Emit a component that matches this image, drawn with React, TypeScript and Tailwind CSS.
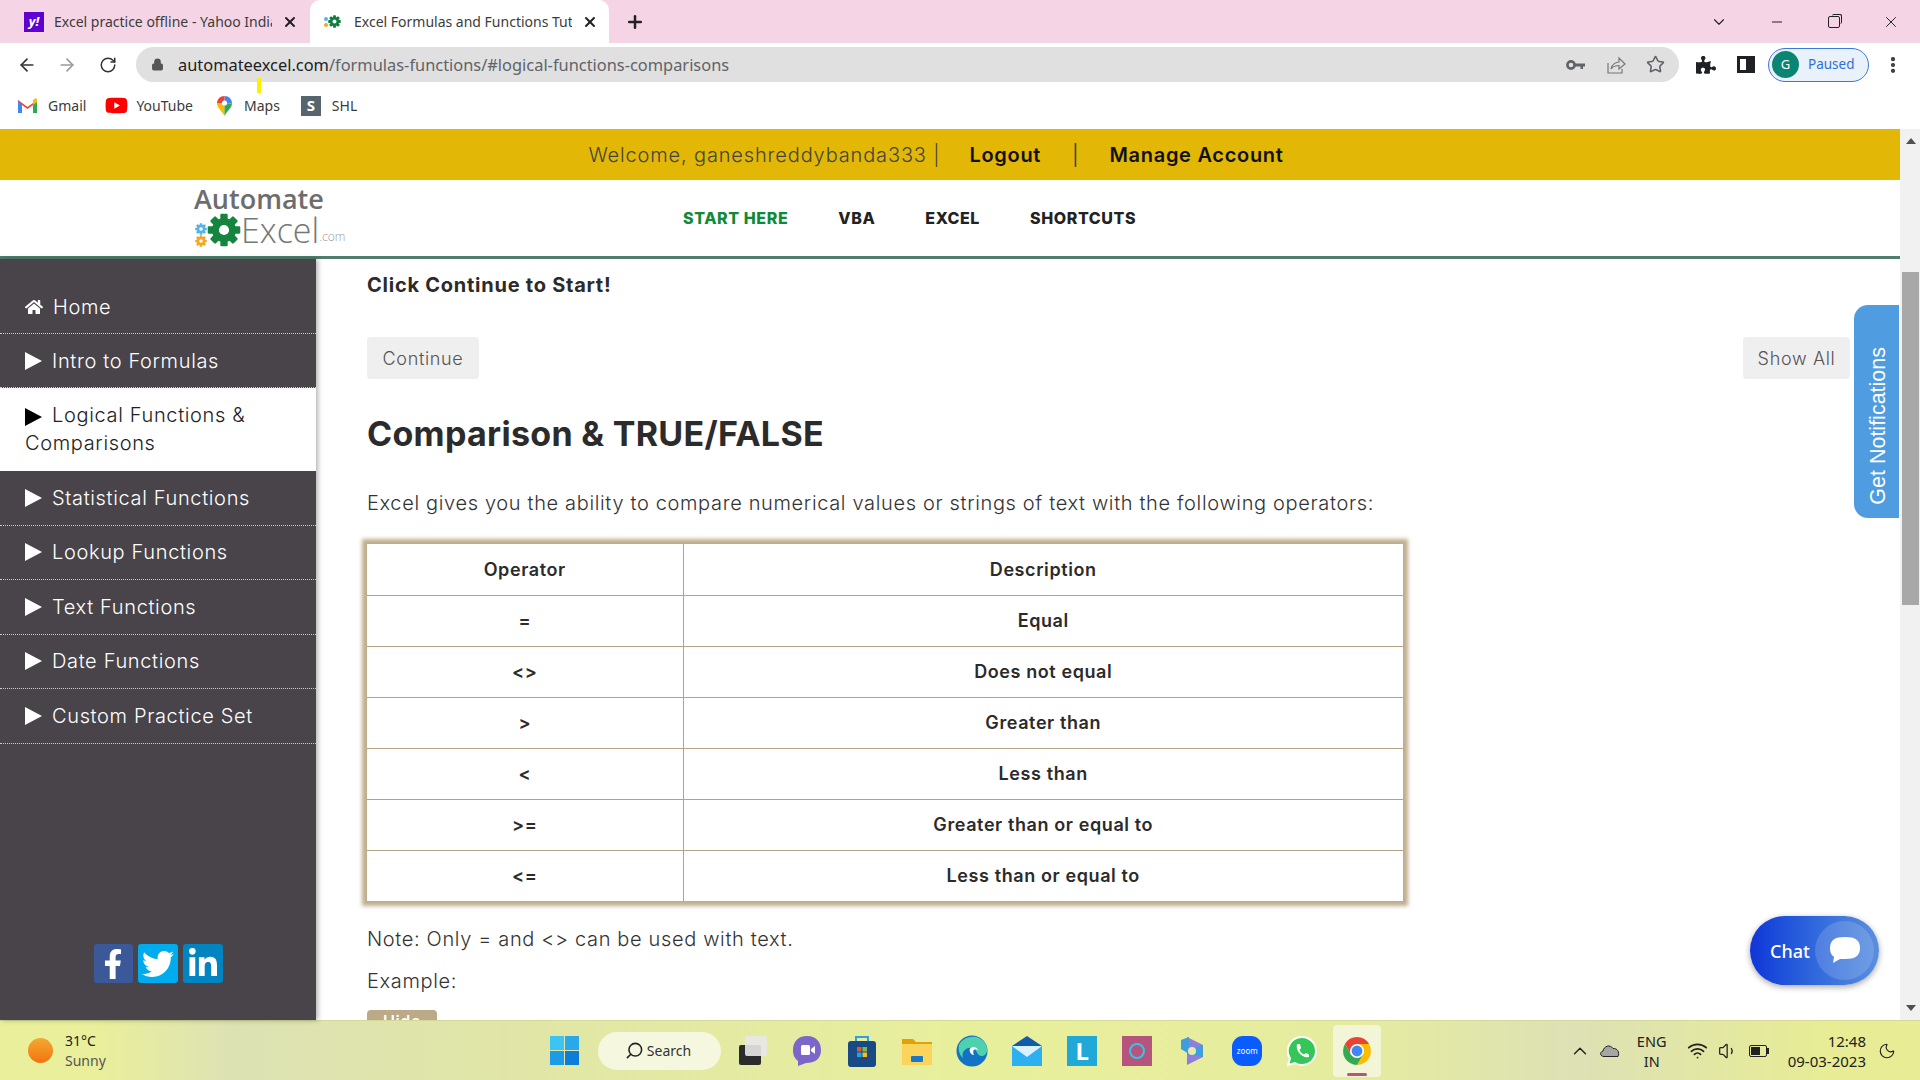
import { ArrowLeft, ArrowRight, RotateCw, Lock, Star, Plus, X, Minus, ChevronDown, ChevronUp, Search, Wifi, Volume1, Moon, EllipsisVertical } from 'lucide-react';
import { FaHome, FaFacebookF, FaTwitter, FaLinkedinIn, FaPuzzlePiece, FaYoutube } from 'react-icons/fa';

const chromeFont = "font-['Noto_Sans',sans-serif]";

const sideItems = [
  'Statistical Functions',
  'Lookup Functions',
  'Text Functions',
  'Date Functions',
  'Custom Practice Set',
];

const rows = [
  ['Operator', 'Description'],
  ['=', 'Equal'],
  ['<>', 'Does not equal'],
  ['>', 'Greater than'],
  ['<', 'Less than'],
  ['>=', 'Greater than or equal to'],
  ['<=', 'Less than or equal to'],
];

function Gear({ size, color }: { size: number; color: string }) {
  const teeth = [0, 45, 90, 135, 180, 225, 270, 315];
  return (
    <svg width={size} height={size} viewBox="0 0 24 24">
      {teeth.map((a) => (
        <rect key={a} x="9.4" y="0.5" width="5.2" height="6" rx="0.8" fill={color} transform={`rotate(${a} 12 12)`} />
      ))}
      <circle cx="12" cy="12" r="8.5" fill={color} />
      <circle cx="12" cy="12" r="3.6" fill="#fff" />
    </svg>
  );
}

function Triangle({ dark }: { dark?: boolean }) {
  return (
    <svg width="17" height="18" viewBox="0 0 17 18" className="inline-block shrink-0">
      <path d="M0 0 L17 9 L0 18 Z" fill={dark ? '#000' : '#fff'} />
    </svg>
  );
}

function Tab({ active, title, icon }: { active?: boolean; title: string; icon: React.ReactNode }) {
  return (
    <div className={`relative flex h-[43px] w-[299px] items-center rounded-t-[10px] pl-[14px] ${active ? 'bg-white ml-[1px]' : 'ml-[10px]'}`}>
      <span className="flex w-[30px] shrink-0 items-center">{icon}</span>
      <span className="w-[218px] overflow-hidden whitespace-nowrap pb-[1px] text-[14px] text-[#3c3c3c]">{title}</span>
      <X size={16} strokeWidth={3} className="ml-[10px] text-[#222]" />
    </div>
  );
}

function ChromeIcon() {
  return (
    <svg width="30" height="30" viewBox="0 0 30 30">
      <path d="M15 1 A14 14 0 0 1 27.1 8 L15 8 Z" fill="#ea4335" />
      <path d="M15 1 A14 14 0 0 0 2.9 8 L8.9 18.5 L15 8 Z" fill="#ea4335" />
      <path d="M27.1 8 A14 14 0 0 1 15 29 L21 18.5 L15 8 Z" fill="#fbbc04" />
      <path d="M2.9 8 A14 14 0 0 0 15 29 L21 18.5 L8.9 18.5 Z" fill="#34a853" />
      <circle cx="15" cy="15" r="7" fill="#fff" />
      <circle cx="15" cy="15" r="5.4" fill="#4285f4" />
    </svg>
  );
}

function TaskIcons() {
  return (
    <div className="flex items-center">
      {/* task view */}
      <div className="flex w-[55px] justify-center">
        <svg width="32" height="32" viewBox="0 0 32 32">
          <rect x="3" y="10" width="22" height="20" rx="2" fill="#2b2b2b" />
          <rect x="9" y="1" width="22" height="20" rx="2" fill="#e8e8e8" opacity="0.9" />
        </svg>
      </div>
      {/* meet */}
      <div className="flex w-[55px] justify-center">
        <svg width="30" height="32" viewBox="0 0 30 32">
          <path d="M15 1 C24 1 29 7 29 15 C29 24 23 28 14 28 L6 31 L6 26 C2 23 1 19 1 15 C1 7 6 1 15 1 Z" fill="#7b67c9" />
          <rect x="9" y="10" width="9" height="10" rx="1.5" fill="#fff" />
          <path d="M19 14 L23 11 L23 19 L19 16 Z" fill="#fff" />
        </svg>
      </div>
      {/* store */}
      <div className="flex w-[55px] justify-center">
        <svg width="30" height="32" viewBox="0 0 30 32">
          <path d="M9 6 V2 H21 V6" fill="none" stroke="#2aa4dc" strokeWidth="2" />
          <rect x="1" y="6" width="28" height="26" rx="3" fill="#1a4a86" />
          <rect x="10" y="12" width="4.5" height="4.5" fill="#e8542e" />
          <rect x="15.5" y="12" width="4.5" height="4.5" fill="#7cbb42" />
          <rect x="10" y="17.5" width="4.5" height="4.5" fill="#1ea5e0" />
          <rect x="15.5" y="17.5" width="4.5" height="4.5" fill="#fbbb1a" />
        </svg>
      </div>
      {/* files */}
      <div className="flex w-[55px] justify-center">
        <svg width="32" height="30" viewBox="0 0 32 30">
          <path d="M1 3 H12 L15 6 H31 V29 H1 Z" fill="#e0a10a" />
          <rect x="1" y="8" width="30" height="21" fill="#fbd55b" />
          <rect x="10" y="20" width="12" height="6" rx="1" fill="#1b78c8" />
        </svg>
      </div>
      {/* edge */}
      <div className="flex w-[55px] justify-center">
        <svg width="32" height="32" viewBox="0 0 32 32">
          <circle cx="16" cy="16" r="15.5" fill="#1273c4" />
          <path d="M3 10 C7 1 22 -2 29 8 C33 14 31 21 26 21 C20 21 22 14 16 13 C10 12 5 17 7 23 C3 20 2 14 3 10 Z" fill="#4fd1b0" />
          <path d="M14 17 C12 12 20 10 22 15 C18 13 16 16 18 20 C16 20 15 19 14 17 Z" fill="#fff" />
        </svg>
      </div>
      {/* mail */}
      <div className="flex w-[55px] justify-center">
        <svg width="30" height="30" viewBox="0 0 30 30">
          <path d="M0 10 L15 0 L30 10 V12 H0 Z" fill="#0f5cab" />
          <rect x="0" y="10" width="30" height="20" fill="#2cb0f0" />
          <path d="M0 10 H30 L15 21 Z" fill="#d9f2fd" />
        </svg>
      </div>
      {/* L app */}
      <div className="flex w-[55px] justify-center">
        <div className={`flex h-[30px] w-[30px] items-center justify-center bg-[#20a8d8] text-[24px] font-bold leading-none text-white ${chromeFont}`}>L</div>
      </div>
      {/* alexa */}
      <div className="flex w-[55px] justify-center">
        <div className="flex h-[30px] w-[30px] items-center justify-center bg-[#b5547c]">
          <div className="h-[16px] w-[16px] rounded-full border-2 border-[#35c4e8]" />
        </div>
      </div>
      {/* copilot */}
      <div className="flex w-[55px] justify-center">
        <svg width="26" height="30" viewBox="0 0 26 30">
          <path d="M8 1 L24 9 V21 L8 29 Z" fill="#8f7fdc" />
          <path d="M2 4 L10 1 V14 L24 9 V21 L10 18 L2 13 Z" fill="#3f9fdc" />
          <circle cx="13" cy="15" r="4" fill="#e4eab0" />
        </svg>
      </div>
      {/* zoom */}
      <div className="flex w-[55px] justify-center">
        <div className={`flex h-[30px] w-[30px] items-center justify-center rounded-[11px] bg-[#0b5cff] text-[8px] text-white ${chromeFont}`}>zoom</div>
      </div>
      {/* whatsapp */}
      <div className="flex w-[55px] justify-center">
        <svg width="30" height="32" viewBox="0 0 30 32">
          <path d="M15 2 A14 14 0 0 1 15 30 C12.5 30 10 29.3 8 28 L1 30 L3 23.5 A14 14 0 0 1 15 2 Z" fill="#35c65a" stroke="#fff" strokeWidth="2" />
          <path d="M10 9 L13 9 L14 13 L12.5 15 C13.5 17 15 18.5 17 19.5 L19 18 L22 19.5 V22 C16 24 8 16 10 9 Z" fill="#fff" />
        </svg>
      </div>
      {/* chrome, the open window */}
      <div className="relative mx-[3px] flex h-[52px] w-[48px] items-center justify-center rounded-[4px] bg-[#f3f6d6]">
        <ChromeIcon />
        <div className="absolute bottom-[1px] left-[14px] h-[3px] w-[20px] rounded-full bg-[#b5547c]" />
      </div>
    </div>
  );
}

export default function App() {
  return (
    <div className="flex h-[1080px] w-[1920px] flex-col overflow-hidden bg-white">
      {/* Tab strip */}
      <div className={`flex h-[43px] shrink-0 items-center bg-[#f5d5e5] ${chromeFont}`}>
        <Tab
          title="Excel practice offline - Yahoo India"
          icon={<span className="flex h-[20px] w-[20px] items-center justify-center bg-[#5f01d1] text-[13px] font-bold italic text-white">y!</span>}
        />
        <Tab
          active
          title="Excel Formulas and Functions Tutorial"
          icon={
            <span className="flex items-center">
              <span className="flex flex-col gap-[2px]">
                <span className="h-[4px] w-[4px] rounded-full bg-[#55b4e6]" />
                <span className="h-[4px] w-[4px] rounded-full bg-[#f5a623]" />
              </span>
              <Gear size={13} color="#107c41" />
            </span>
          }
        />
        <Plus size={20} strokeWidth={3} className="ml-[16px] text-[#222]" />
        <div className="ml-auto flex items-center text-[#222]">
          <ChevronDown size={18} strokeWidth={1.5} />
          <Minus size={16} strokeWidth={1.5} className="ml-[41px]" />
          <div className="relative ml-[43px] h-[12px] w-[12px] rounded-[2px] border border-[#222] before:absolute before:-right-[3px] before:-top-[3px] before:h-[10px] before:w-[10px] before:rounded-[2px] before:border-r before:border-t before:border-[#222]" />
          <X size={18} strokeWidth={1.3} className="ml-[42px] mr-[20px]" />
        </div>
      </div>

      {/* Toolbar */}
      <div className={`relative flex h-[43px] shrink-0 items-center bg-white ${chromeFont}`}>
        <ArrowLeft size={20} strokeWidth={2} className="ml-[17px] text-[#333]" />
        <ArrowRight size={20} strokeWidth={2} className="ml-[20px] text-[#9a9a9a]" />
        <RotateCw size={18} strokeWidth={2} className="ml-[22px] text-[#333]" />
        <div className="ml-[19px] flex h-[35px] w-[1543px] items-center rounded-full bg-[#e0e0e0] pl-[15px]">
          <Lock size={13} fill="#555" strokeWidth={2} className="text-[#555]" />
          <span className="ml-[14px] pt-[1px] text-[16.4px] text-[#5f6368]"><span className="text-[#202124]">automateexcel.com</span>/formulas-functions/#logical-functions-comparisons</span>
          <svg width="19" height="12" viewBox="0 0 19 12" className="ml-auto">
            <circle cx="5" cy="6" r="3.6" fill="none" stroke="#5f6368" strokeWidth="2.6" />
            <path d="M9 4.5 H19 V7.5 H17 V10 H14.5 V7.5 H9 Z" fill="#5f6368" />
          </svg>
          <svg width="20" height="20" viewBox="0 0 20 20" fill="none" stroke="#777" strokeWidth="1.2" className="ml-[21px]">
            <path d="M2 8 V18 H16 V14" />
            <path d="M5 14 C6 9 10 7 13 7 V3 L19 9 L13 14 V10.5 C10 10.5 7 11.5 5 14 Z" />
          </svg>
          <Star size={19} strokeWidth={2} className="ml-[20px] mr-[14px] text-[#5f6368]" />
        </div>
        <FaPuzzlePiece size={20} className="ml-[17px] text-[#202124]" />
        <div className="ml-[21px] h-[17px] w-[18px] border-[3px] border-r-[9px] border-[#202124] bg-white" />
        <div className="ml-[13px] flex h-[34px] w-[101px] items-center rounded-full border border-[#3b78e0] bg-[#e9f1fb] pl-[3px]">
          <span className="flex h-[27px] w-[27px] items-center justify-center rounded-full bg-[#0b8573] text-[13px] text-white">G</span>
          <span className="ml-[9px] text-[13.5px] text-[#2f6fd8]">Paused</span>
        </div>
        <EllipsisVertical size={20} strokeWidth={3} className="ml-[14px] text-[#333]" />
        {/* cursor highlight */}
        <div className="absolute left-[257px] top-[35px] h-[15px] w-[4px] bg-[#ffee00]" />
      </div>

      {/* Bookmarks */}
      <div className={`flex h-[43px] shrink-0 items-center bg-white pb-[4px] text-[14px] text-[#3c3c3c] ${chromeFont}`}>
        <svg width="19" height="15" viewBox="0 0 19 15" className="ml-[18px]">
          <path d="M0 2 L9.5 9 L19 2 V15 H15 V7 L9.5 11 L4 7 V15 H0 Z" fill="#ea4335" />
          <path d="M0 3 V15 H4 V6 Z" fill="#4285f4" />
          <path d="M19 3 V15 H15 V6 Z" fill="#34a853" />
          <path d="M15 2 L17 0.5 C18 0 19 .8 19 2 V4 L15 7 Z" fill="#fbbc04" />
        </svg>
        <span className="ml-[11px]">Gmail</span>
        <FaYoutube size={23} className="ml-[19px] text-[#f00]" />
        <span className="ml-[8px]">YouTube</span>
        <svg width="15" height="20" viewBox="0 0 15 20" className="ml-[24px]">
          <path d="M7.5 0 C12 0 15 3 15 7.5 L7.5 7.5 Z" fill="#4285f4" />
          <path d="M7.5 0 C3 0 0 3 0 7.5 L7.5 7.5 Z" fill="#ea4335" />
          <path d="M0 7.5 C0 12 5 15 7.5 20 L7.5 7.5 Z" fill="#fbbc04" />
          <path d="M15 7.5 C15 12 10 15 7.5 20 L7.5 7.5 Z" fill="#34a853" />
          <circle cx="7.5" cy="7" r="2.6" fill="#fff" />
        </svg>
        <span className="ml-[12px]">Maps</span>
        <div className={`ml-[21px] flex h-[20px] w-[20px] items-center justify-center bg-[#56656d] text-[15px] font-bold text-white ${chromeFont}`}>S</div>
        <span className="ml-[11px]">SHL</span>
      </div>

      {/* Page + scrollbar */}
      <div className="relative flex min-h-0 flex-1 font-['Inter',sans-serif]">
        <div className="flex min-w-0 flex-1 flex-col border-t border-[#e2b705]">
          <div className="flex h-[50px] shrink-0 items-center justify-center bg-[#e2b705] pr-[28px] text-[20px] tracking-[0.7px] text-[#444]">
            <span className="font-light tracking-[0.85px]">Welcome, ganeshreddybanda333 |</span>
            <span className="ml-[29px] font-semibold text-[#111]">Logout</span>
            <span className="ml-[31px]">|</span>
            <span className="ml-[30px] font-semibold text-[#111]">Manage Account</span>
          </div>
          <header className="flex h-[79px] shrink-0 items-center border-b-[3px] border-[#4f7f6c] bg-white">
            <div className="ml-[194px] flex w-[160px] -translate-y-[2px] flex-col">
              <span className="font-['Open_Sans',sans-serif] text-[27px] font-semibold leading-[28px] text-[#6d6d6d]">Automate</span>
              <div className="flex items-end">
                <div className="flex flex-col pl-[1px]">
                  <Gear size={12} color="#55b4e6" />
                  <Gear size={12} color="#f5a623" />
                </div>
                <Gear size={34} color="#15843f" />
                <span className="font-['Open_Sans',sans-serif] text-[34px] font-light leading-[34px] text-[#777]">Excel</span>
                <span className="font-['Open_Sans',sans-serif] text-[12px] font-light leading-[20px] text-[#999]">.com</span>
              </div>
            </div>
            <nav className="ml-[329px] flex items-center gap-[50px] text-[16px] font-extrabold tracking-[0.6px] text-[#222]">
              <span className="text-[#108a36]">START HERE</span>
              <span>VBA</span>
              <span>EXCEL</span>
              <span>SHORTCUTS</span>
            </nav>
          </header>

          <div className="flex min-h-0 flex-1">
            <aside className="z-10 flex w-[316px] shrink-0 flex-col bg-[#48444a] text-[20px] font-light tracking-[0.65px] text-white shadow-[2px_0_5px_rgba(0,0,0,0.3)]">
              <div className="flex h-[75px] items-center border-b border-dotted border-[#ccc] pl-[25px] pt-[22px]">
                <FaHome size={18} />
                <span className="ml-[10px]">Home</span>
              </div>
              <div className="flex h-[54px] items-center gap-[10px] border-b border-dotted border-[#ccc] pl-[25px]">
                <Triangle />
                <span>Intro to Formulas</span>
              </div>
              <div className="h-[83px] bg-white pl-[25px] pt-[13px] leading-[28px] text-[#222]">
                <Triangle dark />
                <span className="ml-[10px]">Logical Functions &amp;</span>
                <br />
                Comparisons
              </div>
              {sideItems.map((s) => (
                <div key={s} className="flex h-[54.5px] items-center gap-[10px] border-b border-dotted border-[#ccc] pl-[25px]">
                  <Triangle />
                  <span>{s}</span>
                </div>
              ))}
              <div className="mt-auto mb-[37px] flex justify-center gap-[5px]">
                <div className="flex h-[39px] w-[39px] items-center justify-center rounded-[3px] bg-[#3b5998]"><FaFacebookF size={30} /></div>
                <div className="flex h-[39px] w-[40px] items-center justify-center rounded-[3px] bg-[#00aced]"><FaTwitter size={32} /></div>
                <div className="flex h-[39px] w-[40px] items-center justify-center rounded-[3px] bg-[#0284c0]"><FaLinkedinIn size={32} /></div>
              </div>
            </aside>

            <main className="min-w-0 flex-1 overflow-hidden pl-[51px] pr-[50px] text-[20px] font-light tracking-[0.65px] text-[#333]">
              <p className="mt-[12px] font-bold leading-[28px] tracking-[0.75px] text-[#2b2b2b]">Click Continue to Start!</p>
              <div className="mt-[38px] flex justify-between text-[18px]">
                <button className="h-[42px] w-[112px] rounded-[4px] bg-[#efefef] text-[#555]">Continue</button>
                <button className="h-[42px] w-[107px] rounded-[4px] bg-[#efefef] text-[#555]">Show All</button>
              </div>
              <h2 className="mt-[33px] text-[34px] font-bold leading-[44px] tracking-[0.3px] text-[#2b2b2b]">Comparison &amp; TRUE/FALSE</h2>
              <p className="mt-[33px] leading-[28px]">Excel gives you the ability to compare numerical values or strings of text with the following operators:</p>
              <table className="mt-[27px] w-[1036px] border-collapse bg-white text-center text-[18px] font-semibold tracking-[0.6px] text-[#2b2b2b] shadow-[0_0_4px_5px_#bfae8e]">
                <tbody>
                  {rows.map((r, i) => (
                    <tr key={i} className="h-[51px] border-b border-[#b5a386] last:border-b-0">
                      <td className="w-[316px] border-r border-[#b5a386]">{r[0]}</td>
                      <td>{r[1]}</td>
                    </tr>
                  ))}
                </tbody>
              </table>
              <p className="mt-[24px] leading-[28px]">Note: Only = and &lt;&gt; can be used with text.</p>
              <p className="mt-[14px] leading-[28px]">Example:</p>
              <div className="mt-[15px] h-[40px] w-[70px] rounded-[4px] bg-[#bba987] pt-[1px] text-center text-[16px] font-semibold leading-[20px] text-white">Hide</div>
            </main>
          </div>
        </div>

        {/* Scrollbar */}
        <div className="flex w-[20px] shrink-0 flex-col items-center bg-[#f1f1f1] pl-[1px]">
          <div className="mt-[9px] h-0 w-0 border-x-[5px] border-b-[6px] border-x-transparent border-b-[#505050]" />
          <div className="mt-[128px] h-[333px] w-[17px] bg-[#a8a8a8]" />
          <div className="mt-auto mb-[9px] h-0 w-0 border-x-[5px] border-t-[6px] border-x-transparent border-t-[#505050]" />
        </div>

        {/* Notification tab */}
        <div className="absolute left-[1854px] top-[176px] flex h-[213px] w-[45px] items-center justify-center rounded-l-[14px] bg-[#4f9de0] pl-[3px] pt-[28px]">
          <span className="rotate-180 font-['Liberation_Sans',sans-serif] text-[21.5px] text-white [writing-mode:vertical-rl]">Get Notifications</span>
        </div>

        {/* Chat bubble */}
        <div className="absolute left-[1750px] top-[787px] flex h-[69px] w-[129px] items-center rounded-full bg-gradient-to-r from-[#1234d8] to-[#5a8fde] pl-[20px] shadow-[0_2px_6px_rgba(0,0,0,0.35)]">
          <span className="pt-[2px] font-['Noto_Sans',sans-serif] text-[18px] font-medium text-white">Chat</span>
          <div className="absolute right-[5px] top-[5px] flex h-[59px] w-[59px] items-center justify-center rounded-full bg-white/15">
            <svg width="32" height="30" viewBox="0 0 32 30">
              <path d="M16 1 C26 1 31 4 31 12 C31 20 26 23 16 23 L11 23 L4 27 L5 21 C2 19 1 16 1 12 C1 4 6 1 16 1 Z" fill="#fff" />
            </svg>
          </div>
        </div>
      </div>

      {/* Windows taskbar */}
      <div className={`relative flex h-[60px] shrink-0 items-center border-t border-[#d4d99a] bg-[linear-gradient(90deg,#eaef9b_0%,#eaef9b_5%,#dde2b4_12%,#e0e5a8_25%,#e8ef9c_50%,#e6ec9e_70%,#dde1b5_82%,#e7ec95_95%)] ${chromeFont}`}>
        <div className="ml-[28px] h-[25px] w-[25px] rounded-full bg-gradient-to-b from-[#f3a92e] to-[#f2720f]" />
        <div className="ml-[12px] text-[14px] leading-[20px]">
          <div className="text-[#222]">31°C</div>
          <div className="text-[#555]">Sunny</div>
        </div>
        <div className="ml-[444px] grid h-[29px] w-[29px] grid-cols-2 gap-[1px]">
          <div className="bg-[#3cc4f4]" />
          <div className="bg-[#2aa9ea]" />
          <div className="bg-[#1c9be6]" />
          <div className="bg-[#0c7dd8]" />
        </div>
        <div className="ml-[19px] flex h-[38px] w-[123px] items-center rounded-full bg-[#f5f8df] pl-[27px] text-[14px] text-[#333]">
          <Search size={19} strokeWidth={2} className="-scale-x-100 text-[#222]" />
          <span className="ml-[3px]">Search</span>
        </div>
        <div className="ml-[4px]"><TaskIcons /></div>
        <div className="ml-auto flex items-center text-[#222]">
          <ChevronUp size={22} strokeWidth={1.5} />
          <svg width="21" height="13" viewBox="0 0 21 13" className="ml-[8px]">
            <path d="M5 12.5 C1 12.5 .5 8 4 7 C5 2 11 0 14 4.5 C18 4 21 8 19 12.5 Z" fill="#a5a5a5" stroke="#222" strokeWidth="1" />
          </svg>
          <div className="ml-[12px] w-[40px] text-center text-[14.5px] leading-[20px]">ENG<br />IN</div>
          <Wifi size={21} strokeWidth={2} className="ml-[15px]" />
          <Volume1 size={20} strokeWidth={1.5} className="ml-[10px]" />
          <div className="relative ml-[11px] flex h-[12px] w-[18px] items-center rounded-[2px] border border-[#222] p-[1px] after:absolute after:-right-[3px] after:top-[2px] after:h-[6px] after:w-[2px] after:bg-[#222]">
            <div className="h-full w-[9px] bg-[#222]" />
          </div>
          <div className="ml-[21px] text-right text-[15px] leading-[20px]">12:48<br />09-03-2023</div>
          <Moon size={18} strokeWidth={1.5} className="ml-[12px] mr-[24px]" />
        </div>
      </div>
    </div>
  );
}
